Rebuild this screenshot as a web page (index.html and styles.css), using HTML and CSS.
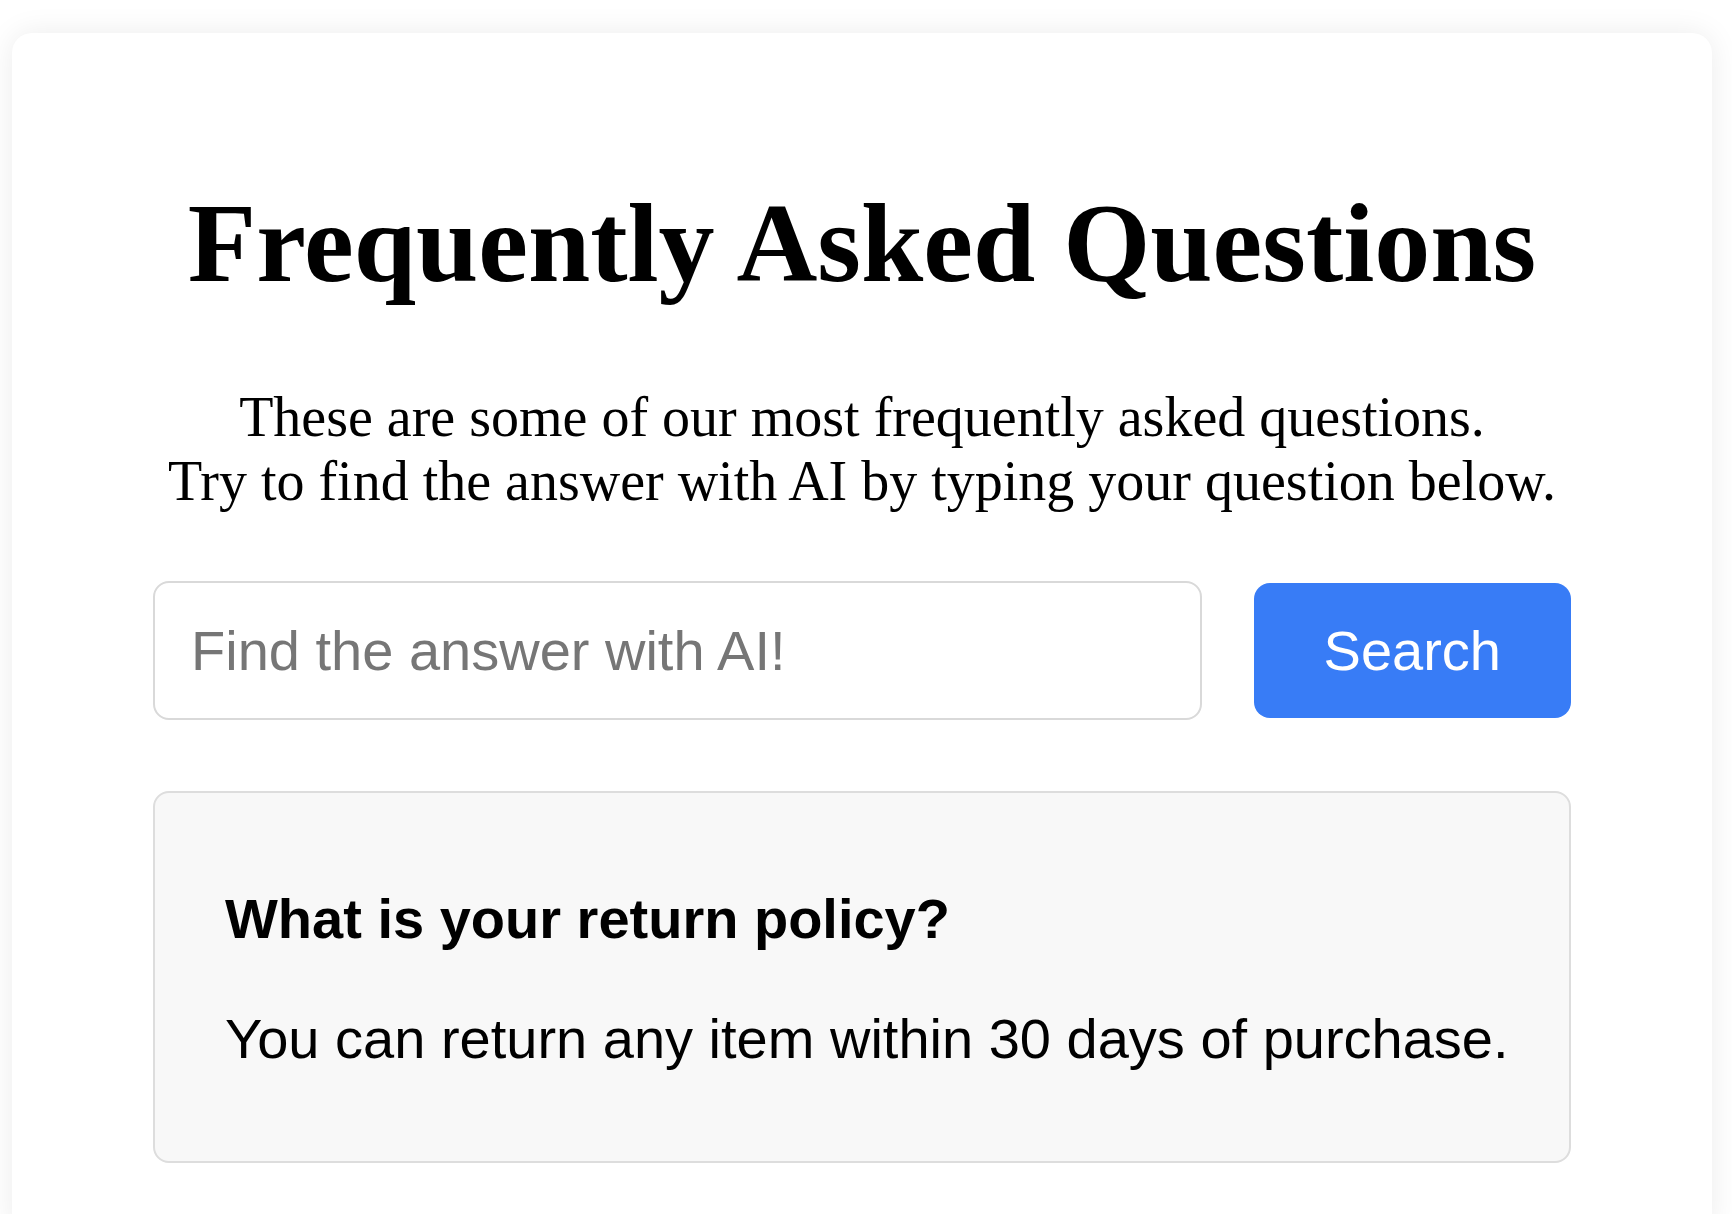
FILE: index.html
```html
<!DOCTYPE html>
<html lang="en">
<head>
  <meta charset="utf-8"/>
  <meta name="viewport" content="width=device-width, initial-scale=1.0">
  <title>FAQ</title>
  <link rel="stylesheet" href="styles.css">
</head>
<body>
  <div class="container">
    <h1>Frequently Asked Questions</h1>

    <p class="intro">
      These are some of our most frequently asked questions.<br>
      Try to find the answer with AI by typing your question below.
    </p>

    <div class="search">
      <input type="text" id="question" placeholder="Find the answer with AI!">
      <button type="button">Search</button>
    </div>

    <div class="faq-item">
      <h3>What is your return policy?</h3>
      <p>You can return any item within 30 days of purchase.</p>
    </div>
  </div>
</body>
</html>
```

FILE: styles.css
```css
body {
  font-family: 'Liberation Serif', 'Times New Roman', serif;
  background-color: #fff;
  color: #000;
  margin: 0;
  padding: 33px 20px 0 12px;
}

.container {
  background: white;
  padding: 72px 141px;
  border-radius: 20px;
  box-shadow: 0 0 30px rgba(0,0,0,0.08);
}

h1 {
  font-size: 112px;
  font-weight: bold;
  text-align: center;
  margin: 74px 0 77px;
}

.intro {
  font-size: 56px;
  text-align: center;
  margin: 0;
}

.search {
  display: flex;
  align-items: center;
  gap: 52px;
  margin-top: 68px;
}

input, button {
  font-family: 'Liberation Sans', Arial, sans-serif;
  font-size: 56px;
}

input {
  flex: 1;
  min-width: 0;
  padding: 35px 36px;
  border: 2px solid #d9d9d9;
  border-radius: 16px;
  outline: none;
}

input::placeholder {
  color: #767676;
}

button {
  background-color: #387cf6;
  color: white;
  border: none;
  border-radius: 16px;
  padding: 35px 70px;
  cursor: pointer;
}

.faq-item {
  margin-top: 71px;
  padding: 36px 30px 36px 70px;
  background: #f8f8f8;
  border: 2px solid #ddd;
  border-radius: 16px;
  font-family: 'Liberation Sans', Arial, sans-serif;
}

.faq-item h3 {
  font-size: 56px;
  margin: 57px 0 55px;
}

.faq-item p {
  font-size: 56px;
  margin: 0 0 54px;
  white-space: nowrap;
}
```
